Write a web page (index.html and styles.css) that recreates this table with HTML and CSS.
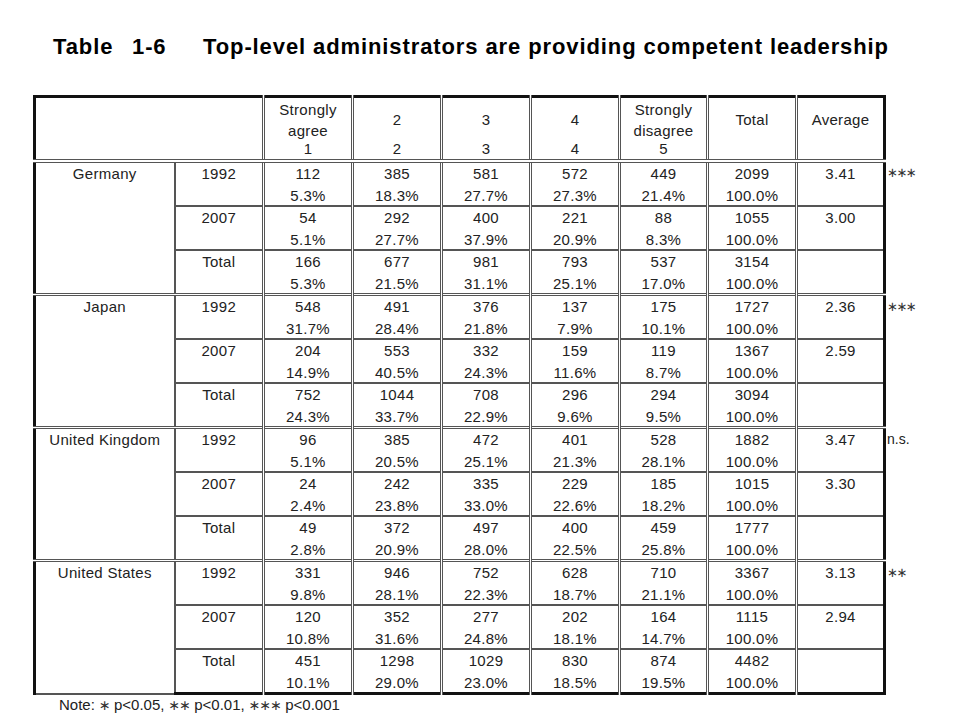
FILE: index.html
```html
<!DOCTYPE html>
<html>
<head>
<meta charset="utf-8">
<link rel="stylesheet" href="styles.css">
</head>
<body>
<h1 class="title"><span class="t1">Table</span><span class="t2">1-6</span><span class="t3">Top-level administrators are providing competent leadership</span></h1>
<table class="grid">
<colgroup>
<col class="c-country"><col class="c-year"><col class="c-n"><col class="c-n"><col class="c-n"><col class="c-n"><col class="c-n5"><col class="c-tot"><col class="c-avg"><col class="c-sig">
</colgroup>
<thead>
<tr class="head">
<th class="hc hc-first" colspan="2"></th>
<th class="hc"><div class="hd-top">Strongly<br>agree</div><div class="hd-bot">1</div></th>
<th class="hc"><div class="hd-top">2</div><div class="hd-bot">2</div></th>
<th class="hc"><div class="hd-top">3</div><div class="hd-bot">3</div></th>
<th class="hc"><div class="hd-top">4</div><div class="hd-bot">4</div></th>
<th class="hc"><div class="hd-top">Strongly<br>disagree</div><div class="hd-bot">5</div></th>
<th class="hc"><div class="hd-top">Total</div><div class="hd-bot">&nbsp;</div></th>
<th class="hc hc-last"><div class="hd-top">Average</div><div class="hd-bot">&nbsp;</div></th>
<th class="sig"></th>
</tr>
</thead>
<tbody>
<tr class="g-first"><td class="country" rowspan="3">Germany</td><td class="year">1992</td><td>112<span class="p">5.3%</span></td><td>385<span class="p">18.3%</span></td><td>581<span class="p">27.7%</span></td><td>572<span class="p">27.3%</span></td><td>449<span class="p">21.4%</span></td><td>2099<span class="p">100.0%</span></td><td class="avg">3.41</td><td class="sig"><span class="ast">∗∗∗</span></td></tr>
<tr><td class="year">2007</td><td>54<span class="p">5.1%</span></td><td>292<span class="p">27.7%</span></td><td>400<span class="p">37.9%</span></td><td>221<span class="p">20.9%</span></td><td>88<span class="p">8.3%</span></td><td>1055<span class="p">100.0%</span></td><td class="avg">3.00</td><td class="sig"></td></tr>
<tr><td class="year">Total</td><td>166<span class="p">5.3%</span></td><td>677<span class="p">21.5%</span></td><td>981<span class="p">31.1%</span></td><td>793<span class="p">25.1%</span></td><td>537<span class="p">17.0%</span></td><td>3154<span class="p">100.0%</span></td><td class="avg"></td><td class="sig"></td></tr>

<tr class="g-first"><td class="country" rowspan="3">Japan</td><td class="year">1992</td><td>548<span class="p">31.7%</span></td><td>491<span class="p">28.4%</span></td><td>376<span class="p">21.8%</span></td><td>137<span class="p">7.9%</span></td><td>175<span class="p">10.1%</span></td><td>1727<span class="p">100.0%</span></td><td class="avg">2.36</td><td class="sig"><span class="ast">∗∗∗</span></td></tr>
<tr><td class="year">2007</td><td>204<span class="p">14.9%</span></td><td>553<span class="p">40.5%</span></td><td>332<span class="p">24.3%</span></td><td>159<span class="p">11.6%</span></td><td>119<span class="p">8.7%</span></td><td>1367<span class="p">100.0%</span></td><td class="avg">2.59</td><td class="sig"></td></tr>
<tr><td class="year">Total</td><td>752<span class="p">24.3%</span></td><td>1044<span class="p">33.7%</span></td><td>708<span class="p">22.9%</span></td><td>296<span class="p">9.6%</span></td><td>294<span class="p">9.5%</span></td><td>3094<span class="p">100.0%</span></td><td class="avg"></td><td class="sig"></td></tr>

<tr class="g-first"><td class="country" rowspan="3">United Kingdom</td><td class="year">1992</td><td>96<span class="p">5.1%</span></td><td>385<span class="p">20.5%</span></td><td>472<span class="p">25.1%</span></td><td>401<span class="p">21.3%</span></td><td>528<span class="p">28.1%</span></td><td>1882<span class="p">100.0%</span></td><td class="avg">3.47</td><td class="sig">n.s.</td></tr>
<tr><td class="year">2007</td><td>24<span class="p">2.4%</span></td><td>242<span class="p">23.8%</span></td><td>335<span class="p">33.0%</span></td><td>229<span class="p">22.6%</span></td><td>185<span class="p">18.2%</span></td><td>1015<span class="p">100.0%</span></td><td class="avg">3.30</td><td class="sig"></td></tr>
<tr><td class="year">Total</td><td>49<span class="p">2.8%</span></td><td>372<span class="p">20.9%</span></td><td>497<span class="p">28.0%</span></td><td>400<span class="p">22.5%</span></td><td>459<span class="p">25.8%</span></td><td>1777<span class="p">100.0%</span></td><td class="avg"></td><td class="sig"></td></tr>

<tr class="g-first"><td class="country" rowspan="3">United States</td><td class="year">1992</td><td>331<span class="p">9.8%</span></td><td>946<span class="p">28.1%</span></td><td>752<span class="p">22.3%</span></td><td>628<span class="p">18.7%</span></td><td>710<span class="p">21.1%</span></td><td>3367<span class="p">100.0%</span></td><td class="avg">3.13</td><td class="sig"><span class="ast">∗∗</span></td></tr>
<tr><td class="year">2007</td><td>120<span class="p">10.8%</span></td><td>352<span class="p">31.6%</span></td><td>277<span class="p">24.8%</span></td><td>202<span class="p">18.1%</span></td><td>164<span class="p">14.7%</span></td><td>1115<span class="p">100.0%</span></td><td class="avg">2.94</td><td class="sig"></td></tr>
<tr class="last"><td class="year">Total</td><td>451<span class="p">10.1%</span></td><td>1298<span class="p">29.0%</span></td><td>1029<span class="p">23.0%</span></td><td>830<span class="p">18.5%</span></td><td>874<span class="p">19.5%</span></td><td>4482<span class="p">100.0%</span></td><td class="avg"></td><td class="sig"></td></tr>
</tbody>
</table>
<p class="note">Note: <span class="ast">∗</span> p&lt;0.05, <span class="ast">∗∗</span> p&lt;0.01, <span class="ast">∗∗∗</span> p&lt;0.001</p>
</body>
</html>
```

FILE: styles.css
```css
html, body {
  margin: 0;
  padding: 0;
  background: #fff;
}
body {
  padding: 34px 0 0 33px;
  font-family: "Liberation Sans", Arial, sans-serif;
  color: #222;
}
.title {
  margin: 0 0 0 20px;
  font-size: 22px;
  line-height: 26px;
  font-weight: bold;
  color: #000;
  display: flex;
  letter-spacing: 0.9px;
}
.t1 { width: 79px; }
.t2 { width: 71px; }
.grid {
  margin-top: 35px;
  border-collapse: collapse;
  table-layout: fixed;
  width: 906px;
  font-size: 15px;
  letter-spacing: 0.3px;
}
.c-country { width: 140px; }
.c-year { width: 89px; }
.c-n { width: 89px; }
.c-n5 { width: 88px; }
.c-tot { width: 89px; }
.c-avg { width: 88px; }
.c-sig { width: 56px; }
.grid td, .grid th {
  padding: 2px 0 0;
  text-align: center;
  vertical-align: top;
  font-weight: normal;
  line-height: 18px;
  height: 40px;
  border-left: 3px double #555;
  border-right: 3px double #555;
  border-top: 2px solid #555;
  border-bottom: 2px solid #555;
}
.p {
  display: block;
  margin-top: 4px;
}
.grid .hc {
  padding: 2px 0 0;
  height: 59px;
  border-top: 3px solid #111;
  border-bottom: 4px double #555;
  line-height: 21px;
}
.hd-top {
  height: 39px;
  display: flex;
  flex-direction: column;
  justify-content: center;
}
.hd-bot {
  height: 20px;
  line-height: 20px;
}
.grid .hc-first { border-left: 3px solid #111; }
.grid .hc-last,
.grid .avg { border-right: 3px solid #111; }
.grid .country {
  border-left: 3px solid #111;
  border-right: 2px solid #555;
}
.grid .year { border-left: 2px solid #555; }
.grid .g-first td { border-top: 3px double #555; }
.grid .last td { border-bottom: 3px solid #111; }
.grid .sig,
.grid .g-first td.sig,
.grid .last td.sig {
  border: none;
  text-align: left;
  padding-left: 1px;
  font-size: 14px;
  letter-spacing: 0;
}
.ast {
  font-family: "DejaVu Sans", sans-serif;
  font-size: 13px;
  letter-spacing: -1.5px;
  color: #333;
}
.note {
  margin: 0 0 0 26px;
  font-size: 15px;
  line-height: 20px;
  color: #222;
  letter-spacing: 0;
}
.note .ast {
  font-size: 14px;
  letter-spacing: -1px;
}
```
